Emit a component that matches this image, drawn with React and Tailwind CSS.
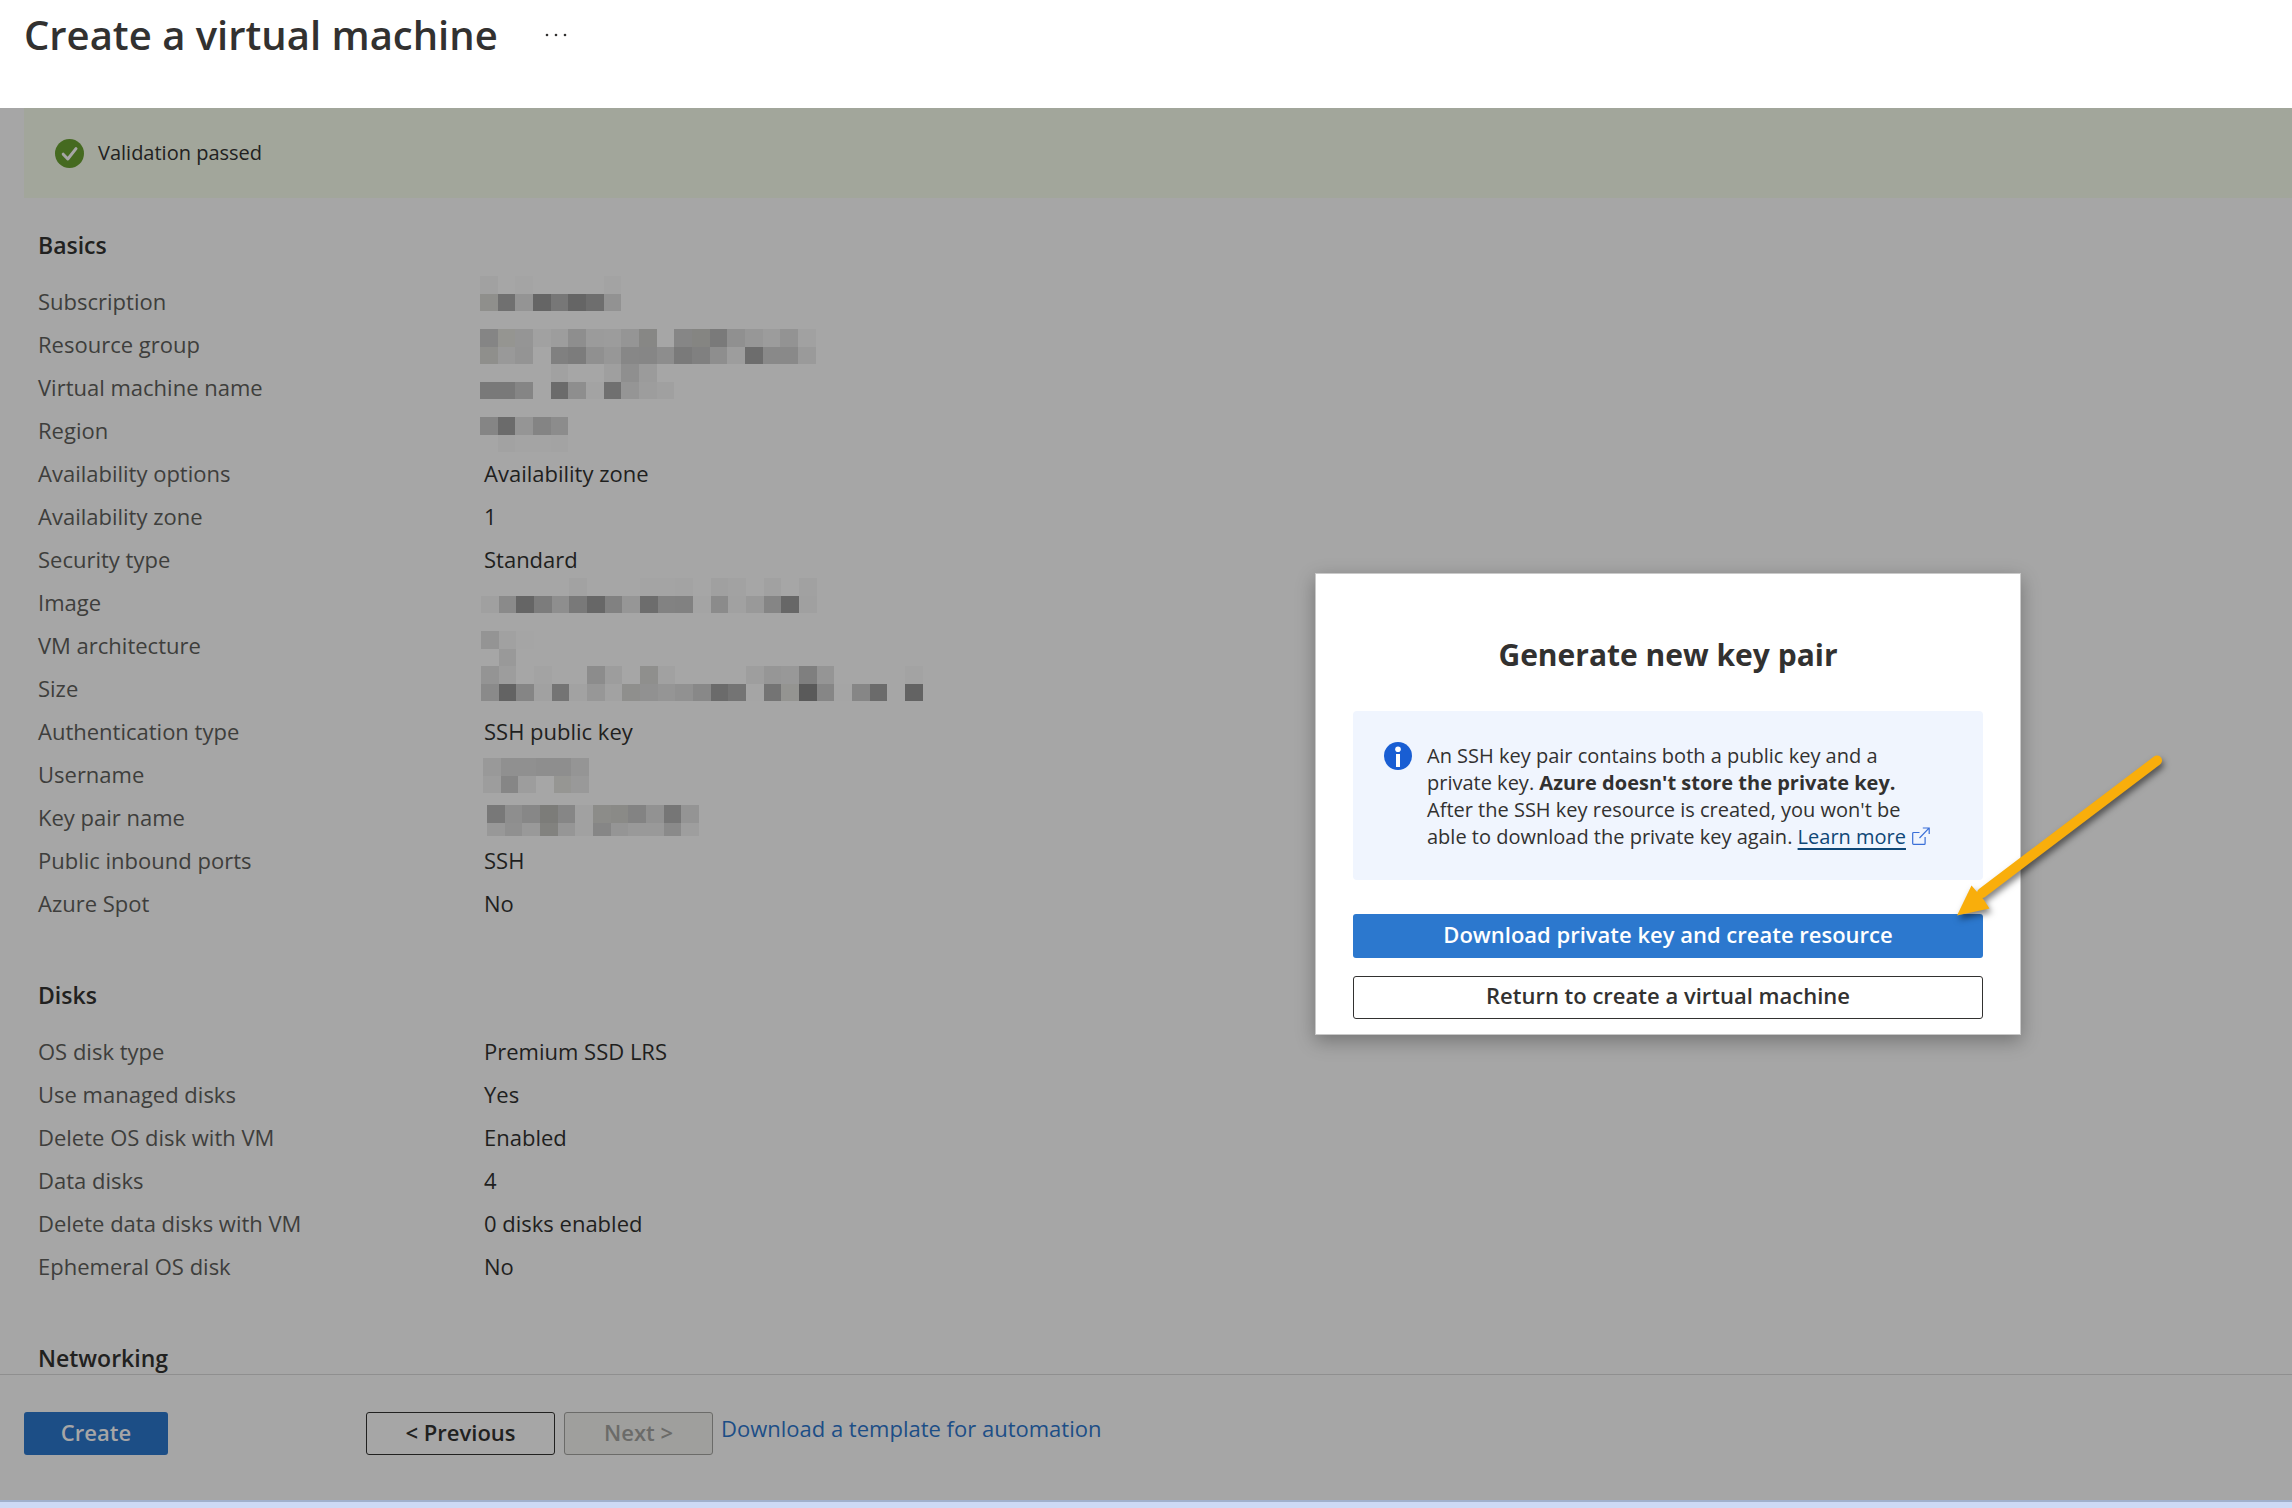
const CELL = 53 / 3;

const basics = [
  {
    label: "Subscription",
    mosaic: { left: 0, top: -3, rows: ["a1 - a4 - - - - a3", "8f8f8c 70 94 65 77 65 6e 92"] },
  },
  {
    label: "Resource group",
    mosaic: {
      left: 0,
      top: 7,
      rows: [
        "85 959591 95 a1 9d 8e 9b 9c 95 878785 - 86 858582 7a 90 97 9c 93 a1",
        "8f8f8c 99 94 - 80 7c 90 97 87 86 8d 7a 80 8e 9d 6d 89 89 9a",
      ],
    },
  },
  {
    label: "Virtual machine name",
    mosaic: { left: 0, top: -1, rows: ["- - - - a1 - - 9f 8f 9b", "79 79 85 - 6b 8e a3 70 95 9d a0"] },
  },
  {
    label: "Region",
    mosaic: { left: 0, top: 9, rows: ["85 6b 95 84 8c", "- a2 a4 a4 a3"] },
  },
  { label: "Availability options", value: "Availability zone" },
  { label: "Availability zone", value: "1" },
  { label: "Security type", value: "Standard" },
  {
    label: "Image",
    mosaic: {
      left: 1,
      top: -2,
      rows: [
        "- - - - - a2 - - - a4 a4 a3 - a0 a2 - a1 - a1",
        "a0 8a 65 7c 8e 79 67 81 96 6d 82 81 a4 8b a1 99 85 67 a0",
      ],
    },
  },
  {
    label: "VM architecture",
    mosaic: { left: 1, top: 8, rows: ["94 a1 a5", "- 99"] },
  },
  {
    label: "Size",
    mosaic: {
      left: 1,
      top: 0,
      rows: [
        "94 9d - a3 - - 8c 9d - 8f8f8d a1 - - - - 9e 96 98 7f 95 - - - - a3",
        "8a 63 85 a1 74 a2 97 a2 8f8f8d 91 95 91 88 6b 74 a5 74 949491 5a 86 a5 86 6b - 63",
      ],
    },
  },
  { label: "Authentication type", value: "SSH public key" },
  {
    label: "Username",
    mosaic: { left: 3, top: 6, rows: ["99 90 90 8e 8e 95", "9d 86 9d - 969693 99"] },
  },
  {
    label: "Key pair name",
    mosaic: {
      left: 7,
      top: 10,
      lastHeight: 13,
      rows: [
        "78 8e 87 7c7c79 86 a1 8c8c89 8a8a87 83 92 76 94",
        "98 90 99 82827f 96 a1 86 95 99 99 8a 9e",
      ],
    },
  },
  { label: "Public inbound ports", value: "SSH" },
  { label: "Azure Spot", value: "No" },
];

const disks = [
  { label: "OS disk type", value: "Premium SSD LRS" },
  { label: "Use managed disks", value: "Yes" },
  { label: "Delete OS disk with VM", value: "Enabled" },
  { label: "Data disks", value: "4" },
  { label: "Delete data disks with VM", value: "0 disks enabled" },
  { label: "Ephemeral OS disk", value: "No" },
];

// Pixelated block that hides a private value. Two hex digits stand for a grey.
function Mosaic({ left, top, rows, lastHeight }) {
  return (
    <svg className="block h-full w-full overflow-visible" aria-hidden="true" shapeRendering="crispEdges">
      {rows.map((row, r) =>
        row.split(" ").map((c, i) => {
          if (c === "-") return null;
          const x = Math.round(left + i * CELL);
          const y = Math.round(top + r * CELL);
          const right = Math.round(left + (i + 1) * CELL);
          const bottom = Math.round(top + (r + 1) * CELL);
          const height = lastHeight && r === rows.length - 1 ? lastHeight : bottom - y;
          return (
            <rect
              key={r + "-" + i}
              x={x}
              y={y}
              width={right - x}
              height={height}
              fill={c.length === 2 ? "#" + c + c + c : "#" + c}
            />
          );
        })
      )}
    </svg>
  );
}

function Section({ title, rows }) {
  return (
    <section className="mb-[51px]">
      <h2 className="mb-[14px] text-[23px] leading-[40px] font-semibold text-[#212120]">{title}</h2>
      <dl>
        {rows.map((row) => (
          <div key={row.label} className="flex h-[43px] items-center text-[22px] leading-[28px]">
            <dt className="w-[442px] shrink-0 text-[#3e3e3c]">{row.label}</dt>
            <dd className="h-full flex-1 text-[#1f1f1e]">
              {row.mosaic ? (
                <Mosaic {...row.mosaic} />
              ) : (
                <span className="flex h-full items-center pl-1">{row.value}</span>
              )}
            </dd>
          </div>
        ))}
      </dl>
    </section>
  );
}

function CheckIcon() {
  return (
    <svg viewBox="0 0 29 29" className="size-[29px] shrink-0" aria-hidden="true">
      <circle cx="14.5" cy="14.5" r="14.5" fill="#456a20" />
      <path d="M8.2 15.2l4.6 4.8 8.2-10.4" fill="none" stroke="#a6a6a6" strokeWidth="3" strokeLinecap="round" strokeLinejoin="round" />
    </svg>
  );
}

function InfoIcon() {
  return (
    <svg viewBox="0 0 28 28" className="size-7 shrink-0" aria-hidden="true">
      <circle cx="14" cy="14" r="14" fill="#195ed3" />
      <circle cx="14" cy="7.2" r="2.8" fill="#fff" />
      <rect x="12" y="12" width="4" height="13" fill="#fff" />
    </svg>
  );
}

function ExternalIcon() {
  return (
    <svg viewBox="0 0 18 18" className="ml-[6px] inline-block size-[18px] align-[-1px]" fill="none" stroke="#3a6fd8" strokeWidth="1.2" aria-hidden="true">
      <path d="M7.5 5.5H1.6a.9.9 0 0 0-.9.9v10a.9.9 0 0 0 .9.9h10.600a.9.9 0 0 0 .9-.9V10" />
      <path d="M7.500 11L17 1.200M10.800 1H17.200V7" />
    </svg>
  );
}

function PointerArrow() {
  return (
    <svg
      viewBox="0 0 220 180"
      className="pointer-events-none absolute top-[177px] left-[630px] h-[180px] w-[220px] overflow-visible drop-shadow-[2px_4px_3px_rgba(0,0,0,0.5)]"
      aria-hidden="true"
    >
      <path d="M211 9.500L36 142" stroke="#f9ae0b" strokeWidth="10" strokeLinecap="round" />
      <path d="M11 164.500L25.500 134.500L32 142L38 149L43.500 157.500Z" fill="#f9ae0b" />
    </svg>
  );
}

function KeyPairDialog() {
  return (
    <div
      role="dialog"
      aria-labelledby="dialog-title"
      className="absolute top-[573px] right-[271px] w-[706px] border border-[#c9c9c9] bg-white px-[37px] pt-[56px] pb-[15px] text-[#323130] shadow-[0_6px_18px_rgba(0,0,0,0.3)]"
    >
      <h2 id="dialog-title" className="text-center text-[30px] leading-[50px] font-bold">
        Generate new key pair
      </h2>
      <div className="mt-[31px] flex gap-[15px] rounded-[4px] bg-[#f0f5fe] px-[31px] pt-[31px] pb-[30px]">
        <InfoIcon />
        <p className="text-[20px] leading-[27px] whitespace-nowrap">
          An SSH key pair contains both a public key and a<br />
          private key. <strong className="font-bold">Azure doesn't store the private key.</strong>
          <br />
          After the SSH key resource is created, you won't be
          <br />
          able to download the private key again.{" "}
          <a href="#learn" className="text-[#0f4777] underline decoration-2 underline-offset-4">
            Learn more
          </a>
          <ExternalIcon />
        </p>
      </div>
      <button type="button" className="mt-[34px] block h-11 w-full rounded-[3px] bg-[#2c78ce] pb-1 text-[22px] font-semibold text-white">
        Download private key and create resource
      </button>
      <button type="button" className="mt-[18px] block h-[43px] w-full rounded-[3px] border border-[#323130] bg-white pb-1 text-[22px] font-semibold">
        Return to create a virtual machine
      </button>
      <PointerArrow />
    </div>
  );
}

export default function App() {
  return (
    <div className="relative flex h-screen flex-col overflow-hidden bg-[#a6a6a6] font-['Open_Sans','Noto_Sans',sans-serif]">
      <header className="flex h-[108px] shrink-0 items-start gap-[47px] bg-white px-6">
        <h1 className="text-[40px] leading-[70px] font-semibold text-[#323130]">Create a virtual machine</h1>
        <button type="button" aria-label="More" className="flex h-[70px] items-center">
          <svg viewBox="0 0 22 4" className="h-1 w-[22px]" fill="#323130" aria-hidden="true">
            <circle cx="2" cy="2" r="1.300" />
            <circle cx="11" cy="2" r="1.300" />
            <circle cx="20" cy="2" r="1.300" />
          </svg>
        </button>
      </header>

      <main className="min-h-0 flex-1 overflow-hidden">
        <div role="status" className="ml-6 flex h-[90px] items-center gap-[14px] bg-[#a2a69b] pl-[31px] text-[20px] text-[#212120]">
          <CheckIcon />
          Validation passed
        </div>
        <div className="pt-[27px] pl-[38px]">
          <Section title="Basics" rows={basics} />
          <Section title="Disks" rows={disks} />
          <Section title="Networking" rows={[]} />
        </div>
      </main>

      <footer className="flex h-[126px] shrink-0 items-start border-t border-[#8f8f8f] px-6 pt-[37px]">
        <button type="button" className="h-[43px] w-[144px] rounded-[3px] bg-[#1c4e86] pb-0.5 text-[22px] font-semibold text-[#a6a6a6]">
          Create
        </button>
        <button type="button" className="ml-[198px] h-[43px] w-[189px] rounded-[3px] border border-[#212120] pb-0.5 text-[22px] font-semibold text-[#212120]">
          &lt; Previous
        </button>
        <button type="button" disabled className="ml-[9px] h-[43px] w-[149px] rounded-[3px] border border-[#6b6b69] bg-[#9f9f9d] pb-0.5 text-[22px] font-semibold text-[#6b6b69]">
          Next &gt;
        </button>
        <a href="#template" className="ml-2 text-[22px] leading-[32px] text-[#1c4e86]">
          Download a template for automation
        </a>
      </footer>
      <div className="h-2 shrink-0 border-t-2 border-[#a0b0cc] bg-[#cddaf5]" />

      <KeyPairDialog />
    </div>
  );
}
